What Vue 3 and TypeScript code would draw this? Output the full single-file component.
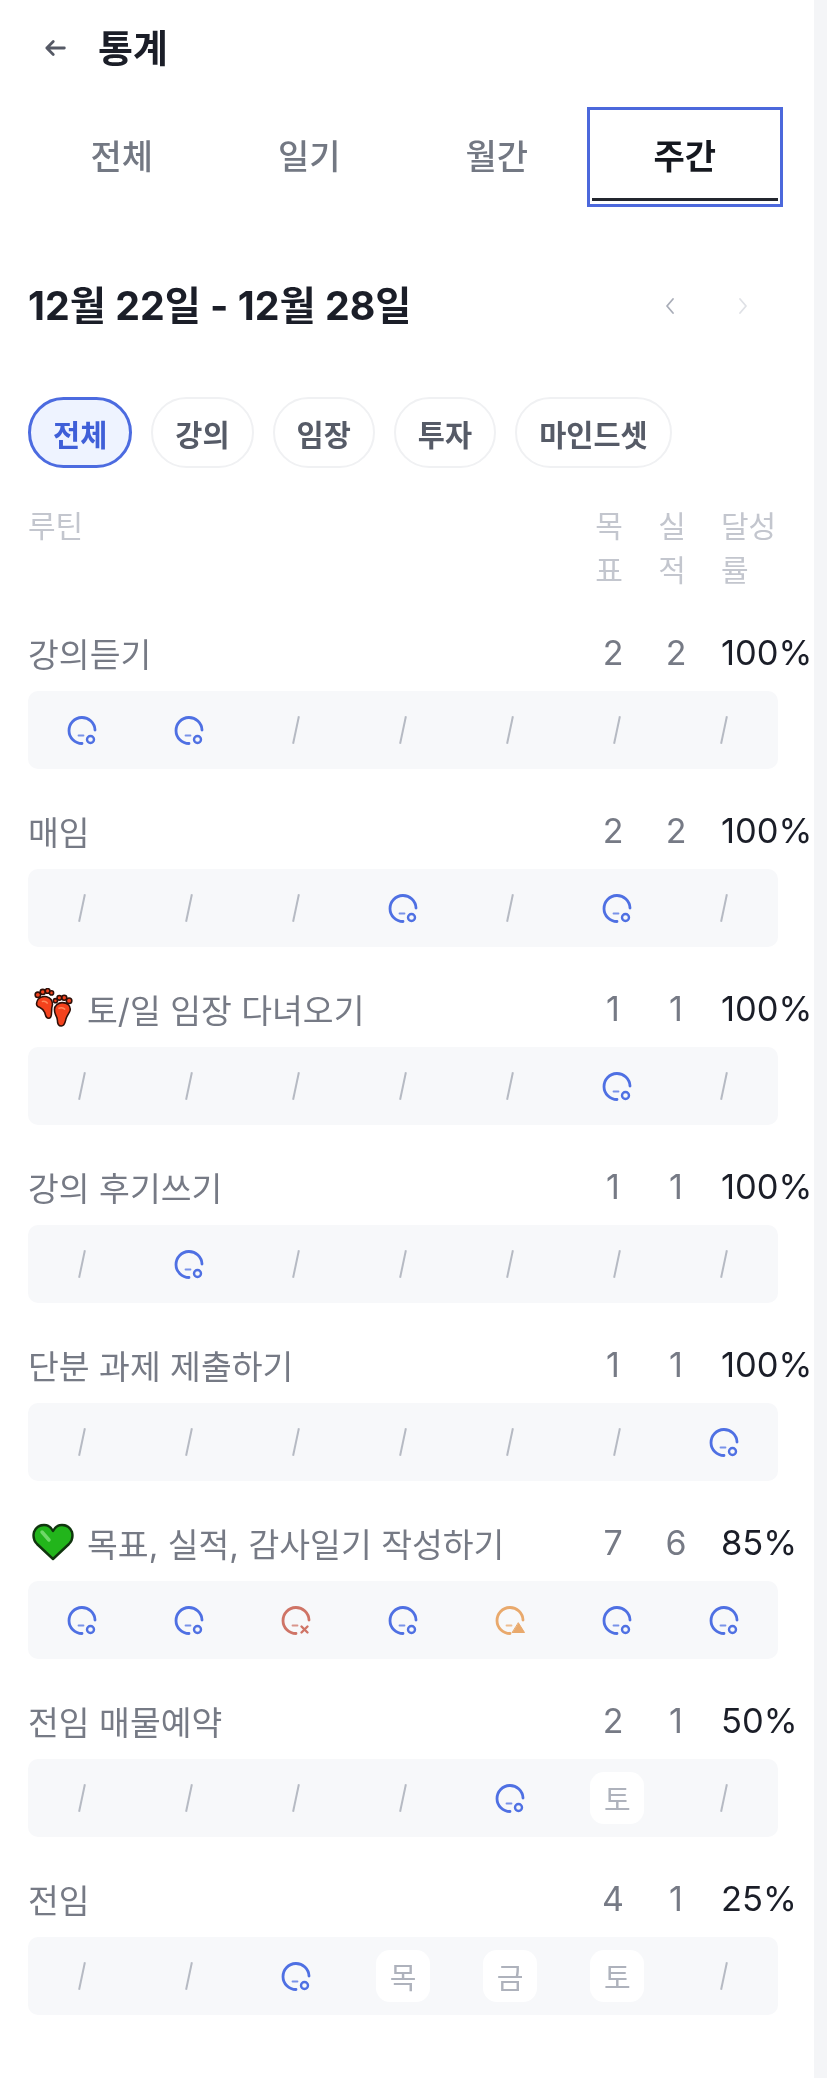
<script setup lang="ts">
type Cell = 'o' | 'x' | 't' | '/' | string
interface Row { name: string; emoji?: 'feet' | 'heart'; goal: number; done: number; rate: string; cells: Cell[] }
const tabs = ['전체', '일기', '월간', '주간']
const chips = ['전체', '강의', '임장', '투자', '마인드셋']
const rows: Row[] = [
  { name: '강의듣기', goal: 2, done: 2, rate: '100%', cells: ['o', 'o', '/', '/', '/', '/', '/'] },
  { name: '매임', goal: 2, done: 2, rate: '100%', cells: ['/', '/', '/', 'o', '/', 'o', '/'] },
  { name: '토/일 임장 다녀오기', emoji: 'feet', goal: 1, done: 1, rate: '100%', cells: ['/', '/', '/', '/', '/', 'o', '/'] },
  { name: '강의 후기쓰기', goal: 1, done: 1, rate: '100%', cells: ['/', 'o', '/', '/', '/', '/', '/'] },
  { name: '단분 과제 제출하기', goal: 1, done: 1, rate: '100%', cells: ['/', '/', '/', '/', '/', '/', 'o'] },
  { name: '목표, 실적, 감사일기 작성하기', emoji: 'heart', goal: 7, done: 6, rate: '85%', cells: ['o', 'o', 'x', 'o', 't', 'o', 'o'] },
  { name: '전임 매물예약', goal: 2, done: 1, rate: '50%', cells: ['/', '/', '/', '/', 'o', '토', '/'] },
  { name: '전임', goal: 4, done: 1, rate: '25%', cells: ['/', '/', 'o', '목', '금', '토', '/'] },
]
const iconKinds = ['o', 'x', 't']
</script>

<template>
  <div class="page">
    <main class="main">
      <header class="top">
        <svg class="back" viewBox="0 0 24 24" fill="none" stroke="#555965" stroke-width="2.4" stroke-linecap="round" stroke-linejoin="round">
          <path d="M20 12H5M10.500 6.500L5 12l5.500 5.500" />
        </svg>
        <h1 class="title">통계</h1>
      </header>

      <nav class="tabs">
        <button v-for="(t, i) in tabs" :key="t" class="tab" :class="{ active: i === 3 }">{{ t }}</button>
      </nav>

      <section class="range">
        <h2 class="date">12월 22일 - 12월 28일</h2>
        <div class="arrows">
          <svg viewBox="0 0 12 24" fill="none" stroke="#a9adb8" stroke-width="1.8" stroke-linecap="round" stroke-linejoin="round"><path d="M9 5L3 12l6 7" /></svg>
          <svg viewBox="0 0 12 24" fill="none" stroke="#dfe1e6" stroke-width="1.8" stroke-linecap="round" stroke-linejoin="round"><path d="M3 5l6 7-6 7" /></svg>
        </div>
      </section>

      <div class="chips">
        <span v-for="(c, i) in chips" :key="c" class="chip" :class="{ on: i === 0 }">{{ c }}</span>
      </div>

      <div class="grid head">
        <span class="name-h">루틴</span>
        <span class="num-h">목<br />표</span>
        <span class="num-h">실<br />적</span>
        <span class="rate-h">달성<br />률</span>
      </div>

      <section v-for="r in rows" :key="r.name" class="row">
        <div class="grid info">
          <span class="name">
            <svg v-if="r.emoji === 'feet'" class="emoji" viewBox="2 1 39 41">
              <g fill="#f4421d" stroke="#2e0f08" stroke-width="1.6" stroke-linejoin="round">
                <path d="M5 15c1-4 6-6 10-5 4 1 6 4 6 8-1 3-1 5-1 8 0 3 0 6-3 6s-3-3-4-6c-1-3-3-4-5-5-3-1-4-3-3-6z" />
                <circle cx="6" cy="8" r="2.800" />
                <circle cx="11" cy="5" r="2.600" />
                <circle cx="16" cy="4" r="2.400" />
                <circle cx="20" cy="6" r="2.100" />
                <path d="M23 23c0-4 4-7 8-7 5 0 9 3 8 8-1 3-3 5-4 8-1 3-1 8-5 8-3 0-4-3-4-6 0-2-1-4-2-6-1-2-1-3-1-5z" />
                <circle cx="38" cy="14" r="2.800" />
                <circle cx="33" cy="11" r="2.600" />
                <circle cx="28" cy="11" r="2.400" />
                <circle cx="24" cy="14" r="2.100" />
              </g>
              <path d="M10 15c2-1 5 0 6 2M27 22c2-1 5-1 7 1" stroke="#ff8a5c" stroke-width="1.500" fill="none" />
            </svg>
            <svg v-else-if="r.emoji === 'heart'" class="emoji" viewBox="0 0 42 38">
              <path d="M21 36L5 21C1 17 1 13 2 9c2-5 6-7 10-7 4 0 7 2 9 6 2-4 5-6 9-6 4 0 8 2 10 7 1 4 1 8-3 12z" fill="#22b51b" stroke="#10350e" stroke-width="2.400" stroke-linejoin="round" />
              <path d="M10 9l7 8" stroke="#6fd868" stroke-width="3.500" stroke-linecap="round" />
            </svg>
            {{ r.name }}
          </span>
          <span class="num">{{ r.goal }}</span>
          <span class="num">{{ r.done }}</span>
          <span class="rate">{{ r.rate }}</span>
        </div>
        <div class="strip">
          <div v-for="(c, i) in r.cells" :key="i" class="cell">
            <span v-if="c === '/'" class="slash"></span>
            <svg v-else-if="iconKinds.includes(c)" class="status" :class="'s-' + c" viewBox="0 0 30 30" fill="none" stroke="currentColor" stroke-width="2.800" stroke-linecap="round">
              <path d="M15 28.500A13 13 0 1 1 28 15" />
              <path d="M11.500 20.500h5" stroke-width="1.800" opacity="0.75" />
              <circle v-if="c === 'o'" cx="23.500" cy="24.500" r="3.500" stroke-width="2.400" />
              <path v-else-if="c === 'x'" d="M20.500 21.500l6 6m0-6l-6 6" stroke-width="2.400" />
              <path v-else d="M23.500 18l6 9.500h-12z" fill="currentColor" stroke-linejoin="round" stroke-width="1" />
            </svg>
            <span v-else class="day">{{ c }}</span>
          </div>
        </div>
      </section>
    </main>
    <aside class="track"></aside>
  </div>
</template>

<style>
html, body { margin: 0; background: #fff; }
</style>

<style scoped>
.page {
  display: flex;
  width: 827px;
  height: 2078px;
  overflow: hidden;
  font-family: Inter, "Noto Sans CJK KR", sans-serif;
  background: #fff;
}
.main { width: 814px; flex: none; box-sizing: border-box; padding: 0 0 0 28px; filter: blur(0.7px); }
.track { width: 13px; flex: none; background: #f4f5f7; }
.top { display: flex; align-items: center; height: 96px; padding-left: 13px; gap: 29px; }
.back { width: 28px; height: 28px; flex: none; }
.title { margin: 0; font-size: 38px; font-weight: 700; color: #1b1e28; line-height: 1; }
.tabs { display: grid; grid-template-columns: repeat(4, 187.5px); height: 100px; margin-top: 11px; }
.tab {
  border: 0;
  background: none;
  padding: 0;
  font: 500 34px Inter, "Noto Sans CJK KR", sans-serif;
  color: #737883;
  box-sizing: border-box;
  padding-bottom: 6px;
}
.tab.active {
  color: #15181f;
  font-weight: 600;
  outline: 3px solid #4c68dc;
  outline-offset: -3px;
  margin: 0 -5px 0 -4px;
  position: relative;
}
.tab.active::after {
  content: '';
  position: absolute;
  left: 5px;
  right: 5px;
  bottom: 6px;
  height: 3px;
  background: #23262f;
}
.range { display: flex; align-items: center; justify-content: space-between; height: 78px; margin-top: 60px; padding-right: 65px; }
.date { margin: 0; font-size: 39.3px; font-weight: 700; color: #1b1e28; line-height: 1; }
.arrows { display: flex; gap: 61px; }
.arrows svg { width: 12px; height: 24px; }
.chips { display: flex; gap: 19px; margin-top: 52px; }
.chip {
  box-sizing: border-box;
  height: 71px;
  padding: 0 22px;
  border: 2px solid #f0f1f3;
  border-radius: 36px;
  display: flex;
  align-items: center;
  font-size: 29.5px;
  font-weight: 600;
  color: #565b67;
}
.chip.on { background: #eef3ff; border: 3px solid #4c6be0; color: #3f5fd8; padding: 0 22px; }
.grid { display: grid; }
.head { margin-top: 36px; font-size: 30px; line-height: 44px; color: #c3c6ce; grid-template-columns: 567px 28px 35px 28px 35px auto; height: 116px; }
.name-h { grid-column: 1; }
.head .num-h:nth-child(2) { grid-column: 2; }
.head .num-h:nth-child(3) { grid-column: 4; }
.head .rate-h { grid-column: 6; white-space: nowrap; }
.num-h { text-align: center; }
.row { height: 178px; }
.info { grid-template-columns: 568px 28px 35px 28px 34px auto; height: 64px; align-items: center; }
.name { grid-column: 1; display: flex; align-items: center; gap: 13px; font-size: 33.5px; color: #767a85; white-space: nowrap; }
.emoji { width: 42px; height: 40px; flex: none; margin-left: 4px; }
.info .num { font-size: 34px; color: #767a85; text-align: center; padding-left: 6px; }
.info .num:nth-child(2) { grid-column: 2; }
.info .num:nth-child(3) { grid-column: 4; }
.rate { grid-column: 6; font-size: 34.5px; color: #1b1e28; white-space: nowrap; }
.strip {
  display: grid;
  grid-template-columns: repeat(7, 1fr);
  width: 750px;
  height: 78px;
  margin-top: 7px;
  background: #f7f8fa;
  border-radius: 10px;
}
.cell { display: flex; align-items: center; justify-content: center; }
.slash { width: 2px; height: 28px; background: #b6bac3; transform: rotate(12deg); }
.status { width: 30px; height: 30px; }
.s-o { color: #4f70e3; }
.s-x { color: #cf7466; }
.s-t { color: #e9a96c; }
.day {
  box-sizing: border-box;
  width: 54px;
  height: 52px;
  background: #fff;
  border-radius: 14px;
  display: flex;
  align-items: center;
  justify-content: center;
  font-size: 29px;
  color: #aeb2bc;
}
</style>
